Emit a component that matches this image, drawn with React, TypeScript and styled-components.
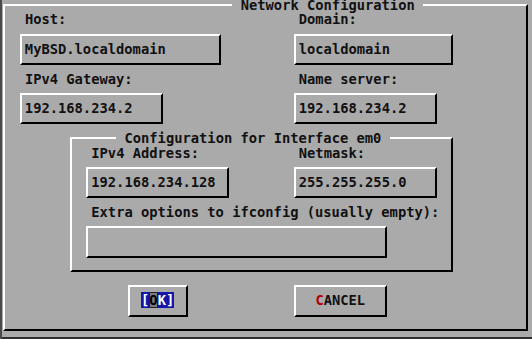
import styled, { createGlobalStyle } from "styled-components";

// text-mode screen: every part sits on a grid of character cells
const C = 8.3; // cell width
const R = 14.8; // cell height
const TOP = 5 - R / 2; // row 0 is cut off a little at the top, as on the screen

const GlobalStyle = createGlobalStyle`
  html, body {
    margin: 0;
    padding: 0;
    background: #aaaaaa;
    overflow: hidden;
  }
`;

const Screen = styled.div`
  width: 532px;
  height: 339px;
  overflow: hidden;
  background: #aaaaaa;
  box-shadow: inset 2px 0 #4a4a4a, inset 0 -2px #2e2e2e;
  font-family: "DejaVu Sans Mono", "Liberation Mono", monospace;
  font-weight: bold;
  font-size: ${C / 0.60205}px;
  line-height: ${R}px;
  color: #111111;
`;

// a box drawn with line characters: light top/left, dark bottom/right
const Frame = styled.fieldset<{ $span: number; $top?: number }>`
  box-sizing: border-box;
  width: ${(p) => p.$span * C + 2}px;
  min-width: 0;
  margin: ${(p) => p.$top ?? 0}px 0 ${R / 2 - 1}px ${C / 2 - 1}px;
  padding: 0;
  border: 2px solid;
  border-color: #ffffff #000000 #000000 #ffffff;
`;

const Title = styled.legend<{ $at: number }>`
  margin-left: ${(p) => p.$at * C - C / 2 - 1}px;
  padding: 0 ${C}px;
  height: ${R}px;
  line-height: ${R}px;
  white-space: pre;
`;

const FrameBody = styled.div`
  padding: 0 ${C / 2 - 1}px ${R / 2 - 1}px;
`;

const Columns = styled.div<{ $split: number }>`
  display: grid;
  grid-template-columns: ${(p) => p.$split * C}px 1fr;
`;

const Field = styled.div<{ $at?: number }>`
  display: flex;
  flex-direction: column;
  align-items: flex-start;
  margin-left: ${(p) => (p.$at ?? 0) * C}px;
`;

const Label = styled.div`
  height: ${R}px;
  padding-left: ${C}px;
  white-space: pre;
`;

const Box = styled.div<{ $span: number }>`
  box-sizing: border-box;
  width: ${(p) => p.$span * C + 2}px;
  height: ${2 * R + 2}px;
  margin: ${R / 2 - 1}px ${C / 2 - 1}px;
  padding: ${R / 2 - 1}px ${C / 2 - 1}px;
  border: 2px solid;
  border-color: #ffffff #000000 #000000 #ffffff;
  white-space: pre;
`;

const Button = styled(Box)`
  text-align: center;
`;

const Selected = styled.span`
  background: #1616a8;
  color: #ffffff;
`;

const Cursor = styled.span`
  background: #7a7a7a;
  color: #000000;
  outline: 1px solid #222222;
  outline-offset: -1px;
`;

const Hotkey = styled.span`
  color: #b00000;
`;

type InputProps = { label: string; value?: string; span: number; at?: number };

const Input = ({ label, value = "", span, at }: InputProps) => (
  <Field $at={at}>
    <Label>{label}</Label>
    <Box $span={span}>{value}</Box>
  </Field>
);

export default function App() {
  return (
    <Screen>
      <GlobalStyle />
      <Frame $span={63} $top={TOP}>
        <Title $at={28}>Network Configuration</Title>
        <FrameBody>
          <Columns $split={34}>
            <Input at={1} label="Host:" value="MyBSD.localdomain" span={24} />
            <Input label="Domain:" value="localdomain" span={19} />
          </Columns>
          <Columns $split={34}>
            <Input at={1} label="IPv4 Gateway:" value="192.168.234.2" span={17} />
            <Input label="Name server:" value="192.168.234.2" span={17} />
          </Columns>

          <Frame $span={46} style={{ marginLeft: 7 * C + C / 2 - 1 }}>
            <Title $at={6}>Configuration for Interface em0</Title>
            <FrameBody>
              <Columns $split={26}>
                <Input at={1} label="IPv4 Address:" value="192.168.234.128" span={17} />
                <Input label="Netmask:" value="255.255.255.0" span={17} />
              </Columns>
              <Input at={1} label="Extra options to ifconfig (usually empty):" span={36} />
            </FrameBody>
          </Frame>

          <Columns $split={34}>
            <Field $at={14}>
              <Button $span={7}>
                <Selected>[</Selected>
                <Cursor>O</Cursor>
                <Selected>K]</Selected>
              </Button>
            </Field>
            <Field>
              <Button $span={11}>
                <Hotkey>C</Hotkey>ANCEL
              </Button>
            </Field>
          </Columns>
        </FrameBody>
      </Frame>
    </Screen>
  );
}
